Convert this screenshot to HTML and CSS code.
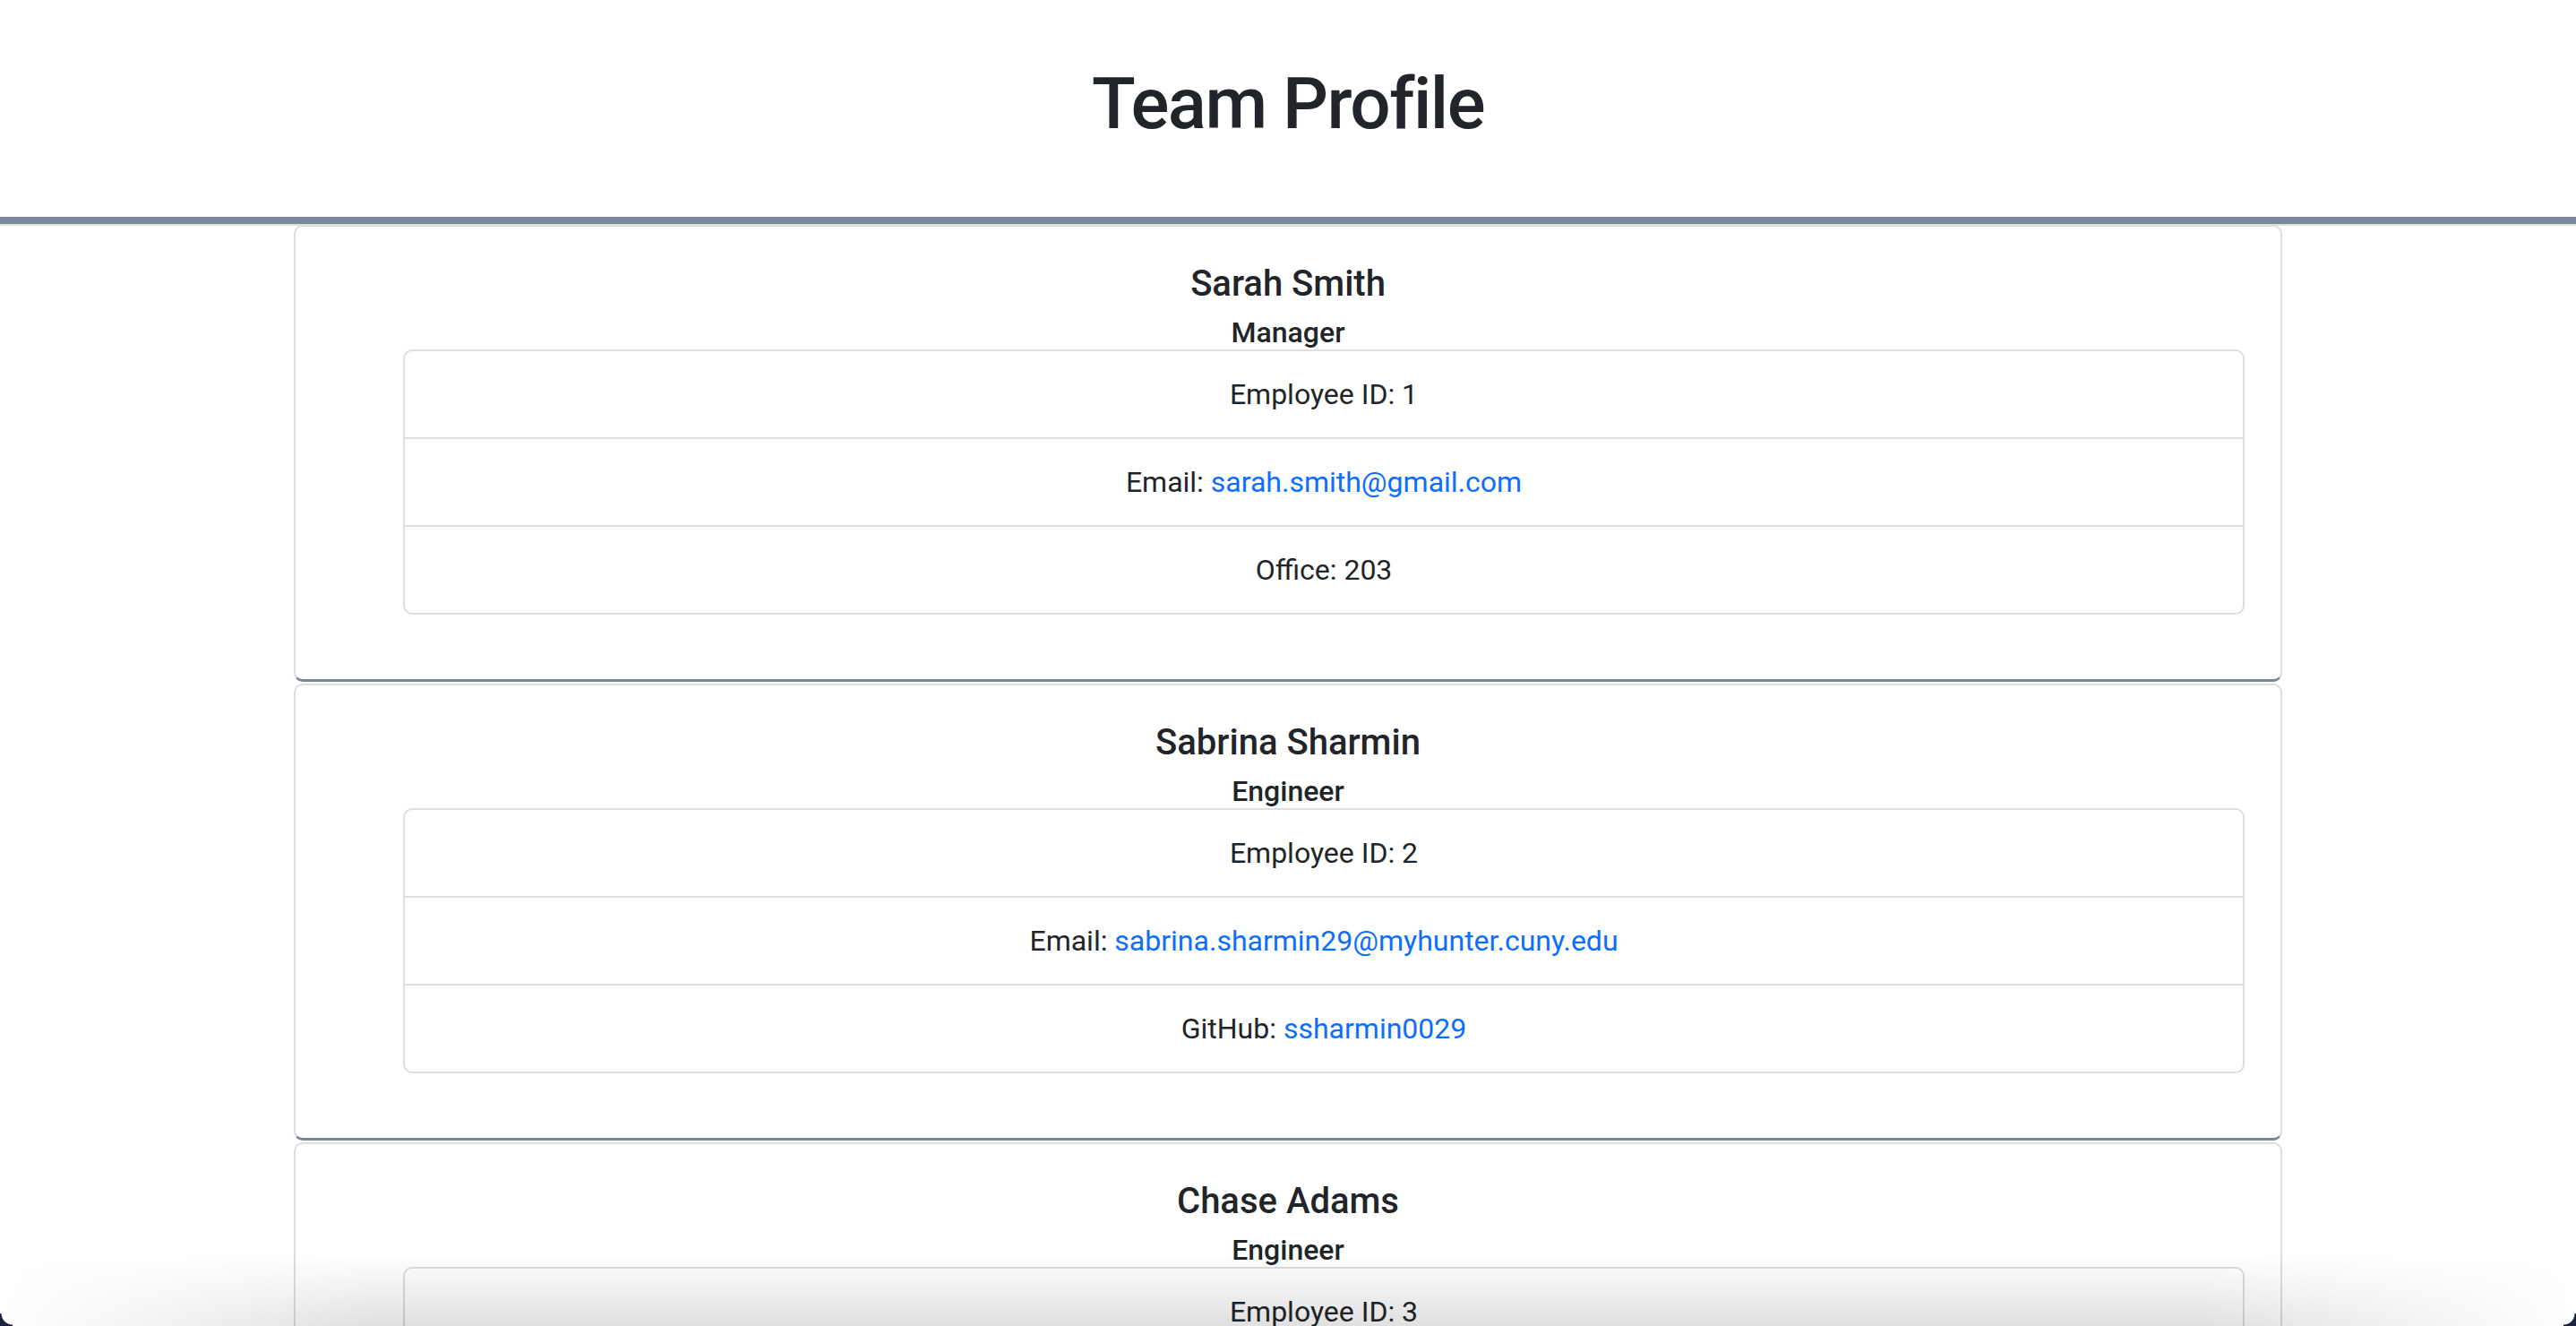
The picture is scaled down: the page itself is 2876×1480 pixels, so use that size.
FILE: index.html
```html
<!DOCTYPE html>
<html lang="en">
<head>
<meta charset="utf-8">
<title>Team Profile</title>
<link rel="stylesheet" href="styles.css">
</head>
<body>
<header class="page-header">
  <h1 class="page-title">Team Profile</h1>
</header>
<main class="team">
  <section class="card">
    <h5 class="card-title">Sarah Smith</h5>
    <h6 class="card-subtitle">Manager</h6>
    <ul class="list-group">
      <li class="list-item">Employee ID: 1</li>
      <li class="list-item">Email: <a href="mailto:sarah.smith@gmail.com">sarah.smith@gmail.com</a></li>
      <li class="list-item">Office: 203</li>
    </ul>
  </section>
  <section class="card">
    <h5 class="card-title">Sabrina Sharmin</h5>
    <h6 class="card-subtitle">Engineer</h6>
    <ul class="list-group">
      <li class="list-item">Employee ID: 2</li>
      <li class="list-item">Email: <a href="mailto:sabrina.sharmin29@myhunter.cuny.edu">sabrina.sharmin29@myhunter.cuny.edu</a></li>
      <li class="list-item">GitHub: <a href="#">ssharmin0029</a></li>
    </ul>
  </section>
  <section class="card">
    <h5 class="card-title">Chase Adams</h5>
    <h6 class="card-subtitle">Engineer</h6>
    <ul class="list-group">
      <li class="list-item">Employee ID: 3</li>
    </ul>
  </section>
</main>
<div class="window-shade"></div>
<div class="corner corner-left"></div>
<div class="corner corner-right"></div>
</body>
</html>
```

FILE: styles.css
```css
html, body {
  margin: 0;
  padding: 0;
  background: #ffffff;
}

body {
  font-family: Roboto, "Liberation Sans", Arial, sans-serif;
  color: #212529;
  font-size: 32px;
  line-height: 1.5;
}

.page-header {
  padding: 68px 0 78px;
  text-align: center;
  border-bottom: 8px solid #778899;
  box-shadow: 0 2px 0 #dedede;
}

.page-title {
  margin: 0;
  font-size: 80px;
  font-weight: 500;
  line-height: 96px;
  letter-spacing: -1.5px;
}

.team {
  display: flex;
  flex-direction: column;
  align-items: center;
  gap: 2px;
  padding-top: 1px;
}

.card {
  box-sizing: border-box;
  width: 2220px;
  border: 2px solid #dedede;
  border-bottom: 3px solid #778899;
  border-radius: 10px;
  padding: 40px 40px 72px 40px;
  text-align: center;
}

.card-title {
  margin: 0 0 11px;
  font-size: 40px;
  font-weight: 500;
  line-height: 48px;
}

.card-subtitle {
  margin: 0;
  font-size: 32px;
  font-weight: 500;
  line-height: 38px;
}

.list-group {
  list-style: none;
  margin: 0 0 0 80px;
  padding: 0;
  border: 2px solid #dedede;
  border-radius: 10px;
}

.list-item {
  padding: 24px 32px;
  line-height: 48px;
}

.list-item + .list-item {
  border-top: 2px solid #dedede;
}

.list-item a {
  color: #0d6efd;
  text-decoration: none;
}

.window-shade {
  position: fixed;
  left: 0;
  right: 0;
  bottom: 0;
  height: 80px;
  pointer-events: none;
  background: linear-gradient(to bottom, rgba(0, 0, 0, 0), rgba(0, 0, 0, 0.12));
  -webkit-mask-image: linear-gradient(to right, transparent 0, #000 420px, #000 calc(100% - 420px), transparent 100%);
  mask-image: linear-gradient(to right, transparent 0, #000 420px, #000 calc(100% - 420px), transparent 100%);
}

.corner {
  position: fixed;
  bottom: 0;
  width: 14px;
  height: 14px;
  pointer-events: none;
}

.corner-left {
  left: 0;
  background: radial-gradient(circle at 100% 0, transparent 12px, #1d2240 13px);
}

.corner-right {
  right: 0;
  background: radial-gradient(circle at 0 0, transparent 12px, #1d2240 13px);
}
```
